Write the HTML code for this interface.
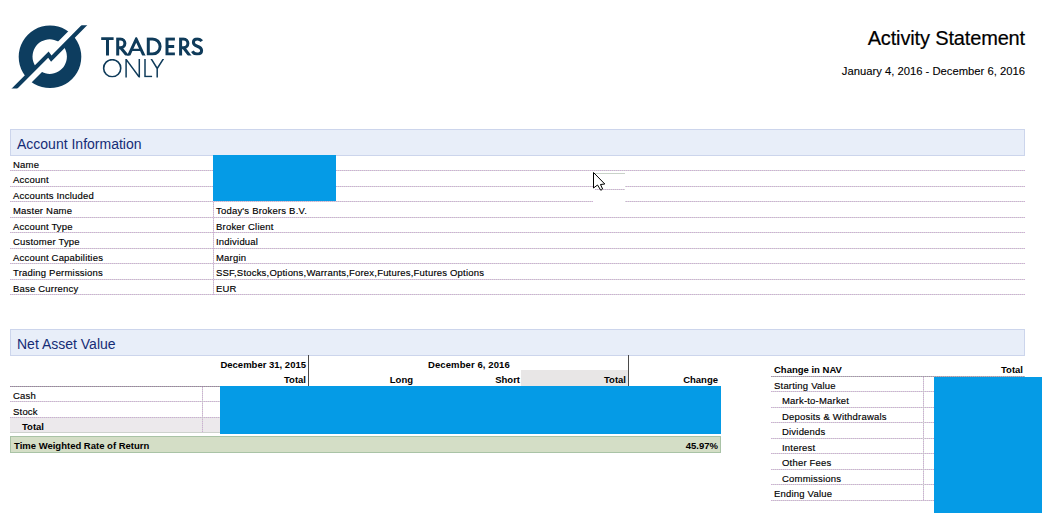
<!DOCTYPE html>
<html><head><meta charset="utf-8">
<style>
html,body{margin:0;padding:0;background:#fff;}
body{width:1058px;height:525px;overflow:hidden;position:relative;font-family:"Liberation Sans",sans-serif;color:#000;}
.a{position:absolute;white-space:nowrap;line-height:10px;font-size:9.5px;letter-spacing:0.2px;-webkit-text-stroke:0.15px #000;}
.b{font-weight:bold;font-size:9.5px;letter-spacing:0;-webkit-text-stroke:0;}
.rt{text-align:right;}
.hl{position:absolute;height:1px;background:repeating-linear-gradient(90deg,#d0a8d8 0 1px,#d2dcd2 1px 2px);}
.hdr{position:absolute;left:10px;width:1013px;height:25px;background:#e8eef9;border:1px solid #ccd5ec;}
.hdr span{position:absolute;left:6px;top:7px;font-size:14px;line-height:14px;color:#152c76;white-space:nowrap;}
.blue{position:absolute;background:#059be6;}
.vl{position:absolute;width:1px;background:repeating-linear-gradient(180deg,#d0a8d8 0 1px,#d2dcd2 1px 2px);}
</style></head><body>

<!-- logo -->
<svg style="position:absolute;left:0;top:0" width="220" height="100" viewBox="0 0 220 100">
  <defs>
    <clipPath id="lc"><rect x="0" y="25.2" width="100" height="63.4"/></clipPath>
  </defs>
  <path fill="#0d3d5f" fill-rule="evenodd" d="M50 25.5 A31.3 31.3 0 1 1 49.99 25.5 Z M49.7 39.3 A17.2 17.3 0 1 0 49.71 39.3 Z"/>
  <polygon fill="#fff" points="15.75,85.75 47.25,54.25 46.35,53.35 84.85,14.85 90.5,20.5 52,59 53.5,60.5 22,92"/>
  <polygon clip-path="url(#lc)" fill="#0d3d5f" points="1.45,104.55 48.17,57.83 51.08,61.74 96.46,15.84 93.54,12.96 51.52,55.46 48.63,51.57 -1.45,101.65"/>
  <clipPath id="tc"><rect x="95" y="37.3" width="120" height="18.3"/></clipPath>
  <clipPath id="oc"><rect x="95" y="58.9" width="120" height="18.5"/></clipPath>
  <g fill="none" stroke="#0f3b5a" stroke-width="3" stroke-linejoin="miter" clip-path="url(#tc)">
    <path d="M101.2 38.6 H113.6 M107.5 37 V56"/>
    <path d="M117.7 56 V38.9 H120.5 A4.4 4.4 0 0 1 120.5 47.7 H117.7 M120.5 47.5 L128.2 56.8"/>
    <path d="M127.9 57.2 L136.25 39.24 L144.6 57.2"/>
    <path d="M131 49.9 H141.5" stroke-width="2.3"/>
    <path d="M148.3 38.9 H152.5 A7.6 7.6 0 0 1 152.5 54.1 H148.3 Z"/>
    <path d="M174.9 38.9 H167 V54.1 H174.9 M167 46.5 H174.2"/>
    <path d="M180.6 56 V38.9 H183.5 A4.4 4.4 0 0 1 183.5 47.7 H180.6 M183.5 47.5 L190.4 56.6"/>
    <path d="M201.8 41.2 Q200.2 38.9 197.3 38.9 Q193.4 38.9 193.4 42.3 Q193.4 45 197.3 46.2 Q201.6 47.5 201.6 50.6 Q201.6 54.1 197 54.1 Q193.9 54.1 192.4 51.3"/>
  </g>
  <g fill="none" stroke="#0f3b5a" stroke-width="1.5" clip-path="url(#oc)">
    <circle cx="112.2" cy="68.2" r="8.55" stroke-width="1.6"/>
    <path d="M126.1 78 V59.4 L139.3 77.2 V58.5" stroke-linejoin="miter"/>
    <path d="M145 58.5 V76.6 H152.1"/>
    <path d="M151 58.5 L157.2 68.5 L163.6 58.5 M157.2 68.5 V78"/>
  </g>
</svg>

<div class="a" style="left:0;right:33px;top:28px;font-size:20px;letter-spacing:-0.15px;line-height:20px;-webkit-text-stroke:0.2px #000;text-align:right">Activity Statement</div>
<div class="a" style="left:0;right:33px;top:66px;font-size:11.25px;letter-spacing:0;-webkit-text-stroke:0.1px #000;line-height:11px;text-align:right">January 4, 2016 - December 6, 2016</div>

<!-- Account Information -->
<div class="hdr" style="top:129px"><span>Account Information</span></div>
<div class="hl" style="left:10px;width:1015px;top:170px"></div>
<div class="hl" style="left:10px;width:1015px;top:186px"></div>
<div class="hl" style="left:10px;width:1015px;top:201px"></div>
<div class="hl" style="left:10px;width:1015px;top:217px"></div>
<div class="hl" style="left:10px;width:1015px;top:232px"></div>
<div class="hl" style="left:10px;width:1015px;top:248px"></div>
<div class="hl" style="left:10px;width:1015px;top:263px"></div>
<div class="hl" style="left:10px;width:1015px;top:279px"></div>
<div class="hl" style="left:10px;width:1015px;top:294px"></div>
<div class="vl" style="left:213px;top:156px;height:139px"></div>
<div class="a" style="left:13px;top:160px">Name</div>
<div class="a" style="left:13px;top:175px">Account</div>
<div class="a" style="left:13px;top:191px">Accounts Included</div>
<div class="a" style="left:13px;top:206px">Master Name</div>
<div class="a" style="left:13px;top:222px">Account Type</div>
<div class="a" style="left:13px;top:237px">Customer Type</div>
<div class="a" style="left:13px;top:253px">Account Capabilities</div>
<div class="a" style="left:13px;top:268px">Trading Permissions</div>
<div class="a" style="left:13px;top:284px">Base Currency</div>
<div class="a" style="left:216px;top:206px">Today's Brokers B.V.</div>
<div class="a" style="left:216px;top:222px">Broker Client</div>
<div class="a" style="left:216px;top:237px">Individual</div>
<div class="a" style="left:216px;top:253px">Margin</div>
<div class="a" style="left:216px;top:268px">SSF,Stocks,Options,Warrants,Forex,Futures,Futures Options</div>
<div class="a" style="left:216px;top:284px">EUR</div>
<div class="blue" style="left:213px;top:155px;width:123px;height:46px"></div>

<!-- glitch + cursor -->
<div style="position:absolute;left:593px;top:171px;width:32px;height:31px;background:#fff"></div>
<div class="hl" style="left:595px;width:30px;top:173px;background:#c9d2c9"></div>
<div class="hl" style="left:595px;width:30px;top:189px"></div>
<svg style="position:absolute;left:590px;top:169px" width="20" height="25" viewBox="590 169 20 25">
  <path d="M593.5 172.5 V188 L597.5 185 L600.8 190.3 L602.6 189 L600.5 184.5 L604.8 184 Z" fill="#fff" stroke="#000" stroke-width="1" stroke-linejoin="round"/>
</svg>

<!-- Net Asset Value -->
<div class="hdr" style="top:329px"><span>Net Asset Value</span></div>

<div class="a b rt" style="left:200px;width:106px;top:360px">December 31, 2015</div>
<div class="a b rt" style="left:200px;width:106px;top:375px">Total</div>
<div class="a b" style="left:428px;top:360px;letter-spacing:0.1px">December 6, 2016</div>
<div style="position:absolute;left:521px;top:370px;width:107px;height:16px;background:#e8e6e6"></div>
<div class="a b rt" style="left:320px;width:93px;top:375px">Long</div>
<div class="a b rt" style="left:420px;width:100px;top:375px">Short</div>
<div class="a b rt" style="left:525px;width:101px;top:375px">Total</div>
<div class="a b rt" style="left:630px;width:88px;top:375px">Change</div>
<div style="position:absolute;left:308px;top:355px;width:1px;height:31px;background:#4a4a4a"></div>
<div style="position:absolute;left:628px;top:355px;width:1px;height:31px;background:#4a4a4a"></div>
<div class="hl" style="left:10px;width:711px;top:386px;background:repeating-linear-gradient(90deg,#a07aa8 0 1px,#a2b2a2 1px 2px)"></div>
<div class="hl" style="left:10px;width:711px;top:401px"></div>
<div style="position:absolute;left:10px;top:417px;width:711px;height:16px;background:#ece9ec"></div>
<div class="hl" style="left:10px;width:711px;top:417px"></div>
<div class="hl" style="left:10px;width:711px;top:432px;background:#cdd2cd"></div>
<div class="vl" style="left:202px;top:387px;height:45px"></div>
<div class="a" style="left:13px;top:391px">Cash</div>
<div class="a" style="left:13px;top:407px">Stock</div>
<div class="a b" style="left:22px;top:422px">Total</div>
<div class="blue" style="left:220px;top:386px;width:501px;height:48px"></div>
<div style="position:absolute;left:10px;top:436px;width:709px;height:15px;background:#d4dec6;border:1px solid #a9c3a6"></div>
<div class="a b" style="left:14px;top:441px">Time Weighted Rate of Return</div>
<div class="a b rt" style="left:600px;width:118px;top:441px">45.97%</div>

<!-- Change in NAV -->
<div class="a b" style="left:774px;top:365px">Change in NAV</div>
<div class="a b rt" style="left:950px;width:73px;top:365px">Total</div>
<div class="hl" style="left:771px;width:254px;top:376px;background:repeating-linear-gradient(90deg,#aa8ab2 0 1px,#b2c2b2 1px 2px)"></div>
<div class="hl" style="left:771px;width:254px;top:391px"></div>
<div class="hl" style="left:771px;width:254px;top:407px"></div>
<div class="hl" style="left:771px;width:254px;top:422px"></div>
<div class="hl" style="left:771px;width:254px;top:438px"></div>
<div class="hl" style="left:771px;width:254px;top:453px"></div>
<div class="hl" style="left:771px;width:254px;top:469px"></div>
<div class="hl" style="left:771px;width:254px;top:484px"></div>
<div class="hl" style="left:771px;width:254px;top:500px"></div>
<div class="vl" style="left:923px;top:377px;height:123px"></div>
<div class="a" style="left:774px;top:381px">Starting Value</div>
<div class="a" style="left:782px;top:396px">Mark-to-Market</div>
<div class="a" style="left:782px;top:412px">Deposits &amp; Withdrawals</div>
<div class="a" style="left:782px;top:427px">Dividends</div>
<div class="a" style="left:782px;top:443px">Interest</div>
<div class="a" style="left:782px;top:458px">Other Fees</div>
<div class="a" style="left:782px;top:474px">Commissions</div>
<div class="a" style="left:774px;top:489px">Ending Value</div>
<div class="blue" style="left:934px;top:377px;width:108px;height:136px"></div>

</body></html>
